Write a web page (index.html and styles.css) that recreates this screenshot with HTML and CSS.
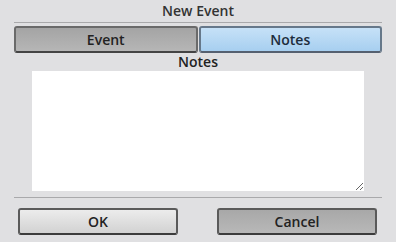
FILE: index.html
```html
<!DOCTYPE html>
<html lang="en">
<head>
    <meta charset="UTF-8">
    <title>New Event</title>
    <link rel="stylesheet" href="styles.css">
</head>
<body>
    <div class="dialog">
        <div class="title">New Event</div>
        <div class="tabs">
            <button class="tab">Event</button>
            <button class="tab active">Notes</button>
        </div>
        <div class="pane">
            <div class="label">Notes</div>
            <textarea class="notes"></textarea>
        </div>
        <div class="actions">
            <button class="btn ok">OK</button>
            <button class="btn cancel">Cancel</button>
        </div>
    </div>
</body>
</html>
```

FILE: styles.css
```css
body {
    margin: 0;
    background-color: #e0e0e2;
    font-family: "Open Sans", sans-serif;
    color: #222;
}
.dialog {
    width: 368px;
    height: 242px;
    margin: 0 14px;
}
.title {
    height: 22px;
    line-height: 22px;
    text-align: center;
    font-size: 14px;
    font-weight: 600;
    color: #333;
    border-bottom: 1px solid #a9a9ab;
}
.tabs {
    display: flex;
    gap: 1px;
    margin-top: 3px;
}
.tab {
    flex: 1;
    height: 27px;
    padding: 0;
    font-family: "Open Sans", sans-serif;
    font-size: 14px;
    font-weight: 600;
    color: #222;
    border: 2px solid #6a6a6a;
    border-bottom-color: #444;
    border-radius: 3px;
    background: linear-gradient(#a4a4a4, #b6b6b6);
}
.tab.active {
    color: #1d2c3c;
    border-color: #66788a;
    border-bottom-color: #556070;
    background: linear-gradient(#c6e1f7, #a7cff0);
}
.pane {
    height: 144px;
}
.label {
    height: 18px;
    line-height: 18px;
    text-align: center;
    font-size: 14px;
    font-weight: 600;
    color: #222;
}
.notes {
    display: block;
    box-sizing: border-box;
    width: 332px;
    height: 120px;
    margin-left: 18px;
    border: none;
    padding: 2px;
    background: white;
}
.actions {
    display: flex;
    justify-content: space-between;
    border-top: 1px solid #a9a9ab;
    padding: 10px 5px 0 4px;
}
.btn {
    width: 160px;
    height: 27px;
    padding: 0;
    font-family: "Open Sans", sans-serif;
    font-size: 14px;
    font-weight: 600;
    color: #222;
    border: 2px solid #5a5a5a;
    border-bottom-color: #3c3c3c;
    border-radius: 3px;
}
.ok {
    background: linear-gradient(#ececec, #d2d2d2);
}
.cancel {
    background: linear-gradient(#a8a8a8, #b8b8b8);
}
```
